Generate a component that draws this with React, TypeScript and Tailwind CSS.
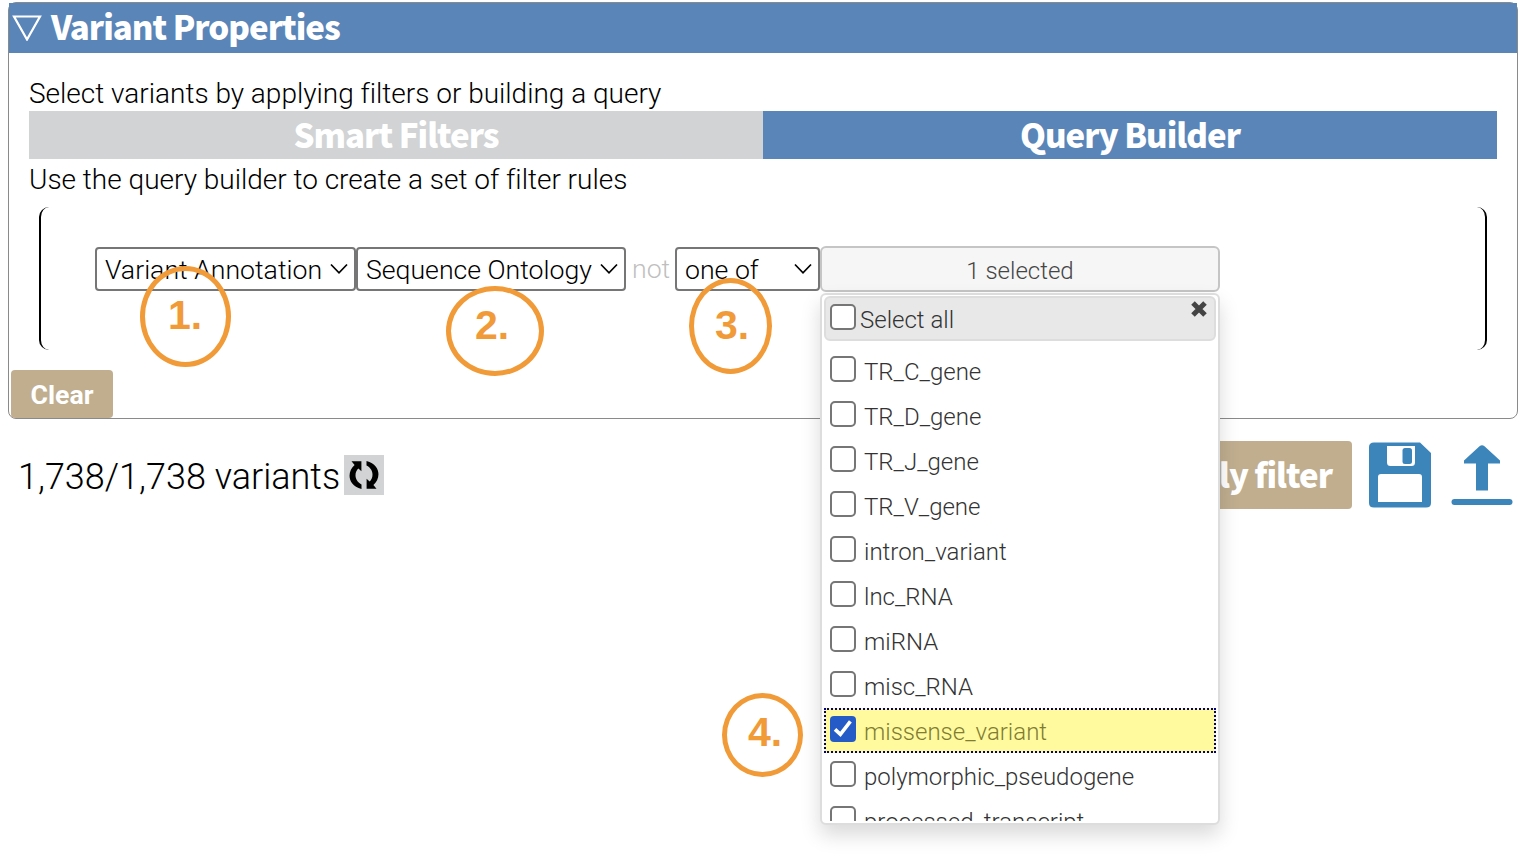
const OPTIONS = [
  'TR_C_gene',
  'TR_D_gene',
  'TR_J_gene',
  'TR_V_gene',
  'intron_variant',
  'lnc_RNA',
  'miRNA',
  'misc_RNA',
  'missense_variant',
  'polymorphic_pseudogene',
  'processed_transcript',
];

const HEADING = "font-['Noto_Sans_CJK_SC',sans-serif] text-[33px] font-black tracking-[-1px] text-white";

function Chevron() {
  return (
    <svg width="18" height="12" viewBox="0 0 18 12" fill="none" stroke="#000" strokeWidth="1.7">
      <path d="M1 1.5 L9 9.8 L17 1.5" />
    </svg>
  );
}

function Select({ label, size }: { label: string; size: string }) {
  return (
    <div
      className={`flex h-11 shrink-0 items-center justify-between rounded-[4px] border-2 border-[#767676] bg-white pr-[6px] pl-2 text-[26.67px] leading-[40px] whitespace-nowrap ${size}`}
    >
      <span className="pt-[2px] leading-[38px]">{label}</span>
      <Chevron />
    </div>
  );
}

function Checkbox({ checked = false }: { checked?: boolean }) {
  if (checked) {
    return (
      <span className="flex size-[26px] shrink-0 items-center justify-center rounded-[4px] bg-[#255bc7]">
        <svg width="20" height="20" viewBox="0 0 20 20" fill="none" stroke="#fff" strokeWidth="3.6">
          <path d="M2 10.4 L7.4 15.4 L17.4 2.4" />
        </svg>
      </span>
    );
  }
  return <span className="size-[26px] shrink-0 rounded-[5px] border-2 border-[#767676] bg-white" />;
}

function Dropdown() {
  return (
    <div className="absolute top-[45px] -left-[2px] z-10 flex h-[532px] w-[400px] flex-col overflow-hidden rounded-[6px] border-2 border-[#ddd] bg-white px-[2px] pt-px pb-[2px] text-[24px] text-[#333] shadow-[0_10px_20px_rgba(0,0,0,0.15)]">
      <div className="flex h-[45px] shrink-0 items-start rounded-[6px] border-2 border-[#ddd] bg-[#e8e8e8] pt-[6px] pr-[7px] pl-[4px]">
        <Checkbox />
        <span className="ml-[4px] leading-[32px]">Select all</span>
        <svg className="-mt-[3px] ml-auto" width="16" height="16" viewBox="0 0 16 16" fill="none" stroke="#444" strokeWidth="5">
          <path d="M2 2 L14 14 M14 2 L2 14" />
        </svg>
      </div>
      <div className="mt-[7px] flex min-h-0 flex-1 flex-col overflow-hidden">
        {OPTIONS.map((name) => {
          const checked = name === 'missense_variant';
          return (
            <div
              key={name}
              className={`flex h-[45px] shrink-0 items-start border-2 border-dotted pt-[6px] pl-[4px] ${
                checked ? 'border-[#000080] bg-[#fffa9e] text-[#7f7d33]' : 'border-transparent'
              }`}
            >
              <Checkbox checked={checked} />
              <span className="ml-[8px] leading-[32px]">{name}</span>
            </div>
          );
        })}
      </div>
    </div>
  );
}

function Callout({ text, ring, label }: { text: string; ring: string; label: string }) {
  return (
    <div className={`absolute z-20 rounded-[50%] border-[5px] border-[#f19a38] ${ring}`}>
      <span
        className={`absolute font-['Liberation_Sans',sans-serif] text-[41px] leading-[40px] font-bold text-[#f19a38] ${label}`}
      >
        {text}
      </span>
    </div>
  );
}

function RefreshIcon() {
  return (
    <svg width="30" height="30" viewBox="0 0 30 30">
      <path d="M2.5 1.3 H12.4 V11.2 L9.4 8.5 C5.2 12.2 5 20.6 12.5 24.4 V29 C-2.6 25 -1.6 10.8 5.6 5 Z" fill="#000" />
      <path d="M27.5 28.7 H17.6 V18.8 L20.6 21.5 C24.8 17.8 25 9.4 17.5 5.6 V1 C32.6 5 31.6 19.2 24.4 25 Z" fill="#000" />
    </svg>
  );
}

function SaveIcon() {
  return (
    <svg width="62" height="66" viewBox="0 0 62 66">
      <path
        fillRule="evenodd"
        fill="#3c85bb"
        d="M5 0.5 H51 L62 11 V61 Q62 65.5 57 65.5 H5 Q0 65.5 0 61 V5 Q0 0.5 5 0.5 Z M18 4 V20.5 Q18 24 21.5 24 H42.5 Q46 24 46 20.5 V4 Z M12 32 Q9 32 9 35 V60 H53 V35 Q53 32 50 32 Z"
      />
      <rect x="33.5" y="6" width="9.5" height="16" rx="2.5" fill="#3c85bb" />
    </svg>
  );
}

function UploadIcon() {
  return (
    <svg width="62" height="62" viewBox="0 0 62 62" fill="#3c85bb">
      <path d="M28.5 2.2 Q31 0.2 33.5 2.2 L49 16.5 V19.5 H37 V46.5 H25 V19.5 H13 V16.5 Z" />
      <rect x="0.5" y="55" width="61" height="6" rx="3" />
    </svg>
  );
}

export default function App() {
  return (
    <div className="relative h-[856px] w-[1530px] overflow-hidden bg-white pt-[2px] pl-2 font-['Roboto',sans-serif] font-light text-black">
      <section className="flex h-[417px] w-[1510px] flex-col rounded-[8px] border border-[#8a8a8a]">
        <header className={`flex h-[50px] shrink-0 items-center bg-[#5a85b8] pl-[3px] ${HEADING}`}>
          <svg className="-mt-[2px]" width="30" height="27" viewBox="0 0 30 27" fill="none" stroke="#fff" strokeWidth="2.2">
            <path d="M2 2.5 H28 L15 25.5 Z" />
          </svg>
          <h1 className="ml-[9px] pb-[4px] leading-[46px]">Variant Properties</h1>
        </header>

        <div className="flex flex-col px-5 pt-[24px] text-[28px] leading-[34px] tracking-[-0.01px]">
          <p className="h-[34px]">Select variants by applying filters or building a query</p>
          <div className={`grid h-12 grid-cols-2 text-center leading-[46px] ${HEADING}`}>
            <div className="bg-[#d1d3d5]">Smart Filters</div>
            <div className="bg-[#5a85b8]">Query Builder</div>
          </div>
          <p className="mt-[4px]">Use the query builder to create a set of filter rules</p>
        </div>

        <div className="mx-[30px] mt-[10px] h-[143px] shrink-0 rounded-[10px] border-x-2 border-black pt-[39px] pl-[54px]">
          <div className="flex items-start">
            <div className="flex pt-px">
              <Select label="Variant Annotation" size="w-[261px]" />
              <Select label="Sequence Ontology" size="w-[270px]" />
              <span className="w-[49px] pl-[6px] text-[26.67px] leading-[44px] text-[#bfbfbf]">not</span>
              <Select label="one of" size="w-[145px]" />
            </div>
            <div className="relative h-[46px] w-[400px] rounded-[6px] border-2 border-[#c5c5c5] bg-[#f6f6f6] text-center text-[24px] leading-[46px] text-[#454545]">
              1 selected
              <Dropdown />
            </div>
          </div>
        </div>

        <button className="mt-5 ml-[2px] h-12 w-[102px] shrink-0 rounded-[4px] bg-[#c0ae8f] pt-px text-[26.67px] leading-[48px] font-bold text-white">
          Clear
        </button>
      </section>

      <div className="flex items-center pt-[22px] pr-[17px] pl-[11px]">
        <span className="-ml-px h-[68px] w-[321px] text-[36px] leading-[72px] whitespace-nowrap">
          1,738/1,738 variants
        </span>
        <button className="ml-[5px] flex size-10 items-center justify-center bg-[#d1d3d5]">
          <RefreshIcon />
        </button>
        <button className={`ml-auto h-[68px] w-[220px] rounded-[4px] bg-[#c0ae8f] pr-5 pb-[2px] text-right leading-[66px] ${HEADING}`}>
          Apply filter
        </button>
        <div className="ml-[17px]">
          <SaveIcon />
        </div>
        <div className="ml-[20px]">
          <UploadIcon />
        </div>
      </div>

      <Callout text="1." ring="left-[140px] top-[266px] h-[101px] w-[91px]" label="left-[23px] top-[24px]" />
      <Callout text="2." ring="left-[446px] top-[286px] h-[90px] w-[98px]" label="left-[24px] top-[14px]" />
      <Callout text="3." ring="left-[689px] top-[278px] h-[96px] w-[83px]" label="left-[21px] top-[22px]" />
      <Callout text="4." ring="left-[722px] top-[693px] h-[84px] w-[81px]" label="left-[21px] top-[14px]" />
    </div>
  );
}
